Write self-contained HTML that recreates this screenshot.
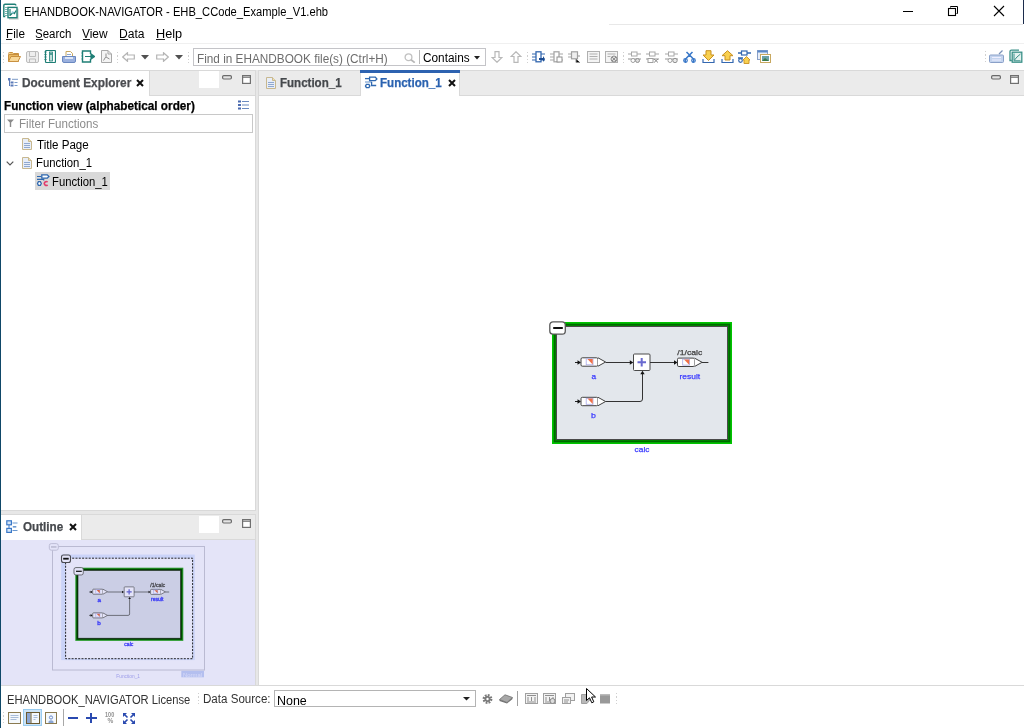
<!DOCTYPE html>
<html><head><meta charset="utf-8">
<style>
*{margin:0;padding:0;box-sizing:border-box}
html,body{width:1024px;height:728px;overflow:hidden;background:#fff}
body{position:relative;font-family:"Liberation Sans",sans-serif;font-size:12px;color:#000}
.a{position:absolute;display:block}
.t{position:absolute;white-space:nowrap;line-height:1;transform-origin:0 0}
</style></head><body>
<div class="a" style="left:0px;top:70px;width:1024px;height:615px;background:#e7e7e7;"></div>
<div class="a" style="left:609px;top:24px;width:414px;height:1px;background:#e8e8e8;"></div>
<div class="a" style="left:1px;top:43px;width:1023px;height:1px;background:#f0f0f0;"></div>
<div class="a" style="left:0px;top:0px;width:1px;height:728px;background:#0f4868;"></div>
<div class="a" style="left:1023px;top:0px;width:1px;height:24px;background:#1c2c4c;"></div>
<svg class="a" style="left:0px;top:0px;" width="24" height="24" viewBox="0 0 24 24"><rect x="9" y="8.6" width="9.6" height="11" fill="#a0a0a0" opacity="0.55"/><path d="M5.3 16.6H3.8V5.4Q3.8 4.2 5 4.2H14.7Q15.9 4.2 15.9 5.6" fill="none" stroke="#1f7f76" stroke-width="1.4"/><path d="M5 7.5H7.5M5 9.5H7.5M5 11.5H7.5M5 13.5H7.5M5 15.5H7.5" stroke="#7ab8b0" stroke-width="1"/><rect x="8" y="7.4" width="9" height="10.3" fill="#fff" stroke="#1f7f76" stroke-width="1.4"/><path d="M10 9V16M10.5 15L13 12.5L14.5 13.5L16 10.5" fill="none" stroke="#1f7f76" stroke-width="1.2"/><circle cx="12.6" cy="12.3" r="1.1" fill="#9cd"/></svg>
<div class="a" style="left:903px;top:11px;width:10px;height:1px;background:#000;"></div>
<svg class="a" style="left:947px;top:5px;" width="12" height="12" viewBox="0 0 12 12"><path d="M3.5 2.5V1.5H10.5V8.5H9.5" fill="none" stroke="#000" stroke-width="1"/><rect x="1.5" y="3.5" width="7" height="7" fill="none" stroke="#000" stroke-width="1.1"/></svg>
<svg class="a" style="left:993px;top:5px;" width="12" height="12" viewBox="0 0 12 12"><path d="M1 1L11 11M11 1L1 11" stroke="#000" stroke-width="1.1"/></svg>
<div class="a" style="left:6.3px;top:39px;width:6px;height:1px;background:#222;"></div>
<div class="a" style="left:36px;top:39px;width:7px;height:1px;background:#222;"></div>
<div class="a" style="left:82.5px;top:39px;width:7.5px;height:1px;background:#222;"></div>
<div class="a" style="left:119.8px;top:39px;width:8px;height:1px;background:#222;"></div>
<div class="a" style="left:156.3px;top:39px;width:8.5px;height:1px;background:#222;"></div>
<div class="a" style="left:3px;top:52.0px;width:1px;height:1.3px;background:#d0d0d0;"></div><div class="a" style="left:3px;top:55.3px;width:1px;height:1.3px;background:#d0d0d0;"></div><div class="a" style="left:3px;top:58.6px;width:1px;height:1.3px;background:#d0d0d0;"></div><div class="a" style="left:3px;top:61.9px;width:1px;height:1.3px;background:#d0d0d0;"></div>
<div class="a" style="left:117px;top:52.0px;width:1px;height:1.3px;background:#d0d0d0;"></div><div class="a" style="left:117px;top:55.3px;width:1px;height:1.3px;background:#d0d0d0;"></div><div class="a" style="left:117px;top:58.6px;width:1px;height:1.3px;background:#d0d0d0;"></div><div class="a" style="left:117px;top:61.9px;width:1px;height:1.3px;background:#d0d0d0;"></div>
<div class="a" style="left:188px;top:52.0px;width:1px;height:1.3px;background:#d0d0d0;"></div><div class="a" style="left:188px;top:55.3px;width:1px;height:1.3px;background:#d0d0d0;"></div><div class="a" style="left:188px;top:58.6px;width:1px;height:1.3px;background:#d0d0d0;"></div><div class="a" style="left:188px;top:61.9px;width:1px;height:1.3px;background:#d0d0d0;"></div>
<div class="a" style="left:527px;top:52.0px;width:1px;height:1.3px;background:#d0d0d0;"></div><div class="a" style="left:527px;top:55.3px;width:1px;height:1.3px;background:#d0d0d0;"></div><div class="a" style="left:527px;top:58.6px;width:1px;height:1.3px;background:#d0d0d0;"></div><div class="a" style="left:527px;top:61.9px;width:1px;height:1.3px;background:#d0d0d0;"></div>
<div class="a" style="left:623px;top:52.0px;width:1px;height:1.3px;background:#d0d0d0;"></div><div class="a" style="left:623px;top:55.3px;width:1px;height:1.3px;background:#d0d0d0;"></div><div class="a" style="left:623px;top:58.6px;width:1px;height:1.3px;background:#d0d0d0;"></div><div class="a" style="left:623px;top:61.9px;width:1px;height:1.3px;background:#d0d0d0;"></div>
<div class="a" style="left:985px;top:51.0px;width:1px;height:1.3px;background:#d0d0d0;"></div><div class="a" style="left:985px;top:54.3px;width:1px;height:1.3px;background:#d0d0d0;"></div><div class="a" style="left:985px;top:57.6px;width:1px;height:1.3px;background:#d0d0d0;"></div><div class="a" style="left:985px;top:60.9px;width:1px;height:1.3px;background:#d0d0d0;"></div>
<svg class="a" style="left:8px;top:52px;" width="13" height="10" viewBox="0 0 13 10"><path d="M0.5 1.5Q0.5 0.5 1.5 0.5H4.5L5.5 1.5H10.5V3.5" fill="#f0c878" stroke="#c89040"/><path d="M0.5 9.5V2.5H10.5V9.5Z" fill="#e8b860" stroke="#c89040"/><path d="M0.5 9.5L3 4.5H12.5L10 9.5Z" fill="#f8d898" stroke="#c89040"/></svg>
<svg class="a" style="left:26px;top:51px;" width="13" height="12" viewBox="0 0 13 12"><rect x="0.5" y="0.5" width="12" height="11" rx="1.5" fill="#eee" stroke="#bdbdbd"/><path d="M3.5 0.5V5.5H9.5V0.5M3.5 11.5V8H9.5V11.5" fill="none" stroke="#bdbdbd"/></svg>
<svg class="a" style="left:44px;top:50px;" width="12" height="13" viewBox="0 0 12 13"><rect x="1.5" y="0.5" width="10" height="12" rx="1" fill="#fff" stroke="#1f7f76" stroke-width="1.2"/><path d="M0.5 2H2.5M0.5 4.5H2.5M0.5 7H2.5M0.5 9.5H2.5" stroke="#1f7f76"/><rect x="5.5" y="2" width="3" height="9" fill="#bfe0dc" stroke="#1f7f76" stroke-width="0.8"/><circle cx="7" cy="4" r="0.9" fill="#1f7f76"/></svg>
<svg class="a" style="left:62px;top:51px;" width="14" height="12" viewBox="0 0 14 12"><path d="M4 6V0.5H8.5L10.5 2.5V6" fill="#fff" stroke="#c8a860"/><rect x="5" y="3" width="4" height="1" fill="#90a8d0"/><path d="M0.5 5.5H13.5V10Q13.5 11.5 12 11.5H2Q0.5 11.5 0.5 10Z" fill="#9ab0de" stroke="#6a88c0"/><rect x="3" y="6" width="8" height="2" fill="#dde6f6"/></svg>
<svg class="a" style="left:81px;top:50px;" width="14" height="13" viewBox="0 0 14 13"><path d="M9.5 4V1H1.5V12H9.5V9" fill="#fff" stroke="#1f7f76" stroke-width="1.4"/><path d="M0.5 3H2M0.5 6H2M0.5 9H2" stroke="#1f7f76"/><path d="M4 6.5H10V4L13.5 6.5L10 9V6.5" fill="#1f7f76" stroke="#1f7f76" stroke-width="1.2"/></svg>
<svg class="a" style="left:101px;top:50px;" width="11" height="13" viewBox="0 0 11 13"><path d="M0.5 0.5H7L10.5 4V12.5H0.5Z" fill="#f4f4f4" stroke="#a8a8a8"/><path d="M7 0.5V4H10.5" fill="none" stroke="#a8a8a8"/><path d="M2.5 10.5L5 6.5L5 3.5M5 7L8.5 9" fill="none" stroke="#909090"/></svg>
<svg class="a" style="left:122px;top:52px;" width="13" height="10" viewBox="0 0 13 10"><path d="M0.7 5L5.5 0.7V3H12.3V7H5.5V9.3Z" fill="#fff" stroke="#b4b4b4" stroke-width="1.2"/></svg>
<svg class="a" style="left:156px;top:52px;" width="13" height="10" viewBox="0 0 13 10"><path d="M12.3 5L7.5 0.7V3H0.7V7H7.5V9.3Z" fill="#fff" stroke="#b4b4b4" stroke-width="1.2"/></svg>
<svg class="a" style="left:141px;top:55px;" width="9" height="5" viewBox="0 0 9 5"><path d="M0 0H8L4 4.5Z" fill="#505050"/></svg>
<svg class="a" style="left:175px;top:55px;" width="9" height="5" viewBox="0 0 9 5"><path d="M0 0H8L4 4.5Z" fill="#505050"/></svg>
<div class="a" style="left:193px;top:48px;width:293px;height:18px;background:#fff;border:1px solid #c4c4c8"></div>
<svg class="a" style="left:404px;top:53px;" width="12" height="10" viewBox="0 0 12 10"><circle cx="4.5" cy="4.2" r="3.4" fill="#fff" stroke="#c0c0c0" stroke-width="1.3"/><path d="M7 6.8L10.8 9.6" stroke="#b8b8b8" stroke-width="1.8"/></svg>
<div class="a" style="left:418.5px;top:50px;width:1px;height:14px;background:#b8b8b8;"></div>
<svg class="a" style="left:474px;top:56px;" width="6" height="4" viewBox="0 0 6 4"><path d="M0 0H6L3 3.5Z" fill="#202020"/></svg>
<svg class="a" style="left:491px;top:51px;" width="12" height="12" viewBox="0 0 12 12"><path d="M4 0.7H8V6.5H11L6 11.3L1 6.5H4Z" fill="#fff" stroke="#b8b8b8" stroke-width="1.2"/></svg>
<svg class="a" style="left:510px;top:51px;" width="12" height="12" viewBox="0 0 12 12"><path d="M4 11.3H8V5.5H11L6 0.7L1 5.5H4Z" fill="#fff" stroke="#b8b8b8" stroke-width="1.2"/></svg>
<svg class="a" style="left:532px;top:51px;" width="13" height="12" viewBox="0 0 13 12"><rect x="4" y="0.8" width="5" height="10" fill="#fff" stroke="#3468b0" stroke-width="1.3"/><path d="M0 3H4M0 6H4M0 9H4M9 3H13M9 9H13" stroke="#3468b0" stroke-width="1.2"/><path d="M7 7H11V5L13 8L11 11V9H7Z" fill="#1a4a90"/></svg>
<svg class="a" style="left:550px;top:51px;" width="13" height="12" viewBox="0 0 13 12"><rect x="4" y="0.8" width="5" height="10" fill="#fff" stroke="#a8a8a8" stroke-width="1.3"/><path d="M0 3H4M0 6H4M0 9H4M9 3H13M9 9H13" stroke="#a8a8a8" stroke-width="1.2"/><rect x="7" y="6" width="5" height="5" fill="#fff" stroke="#909090"/></svg>
<svg class="a" style="left:568px;top:51px;" width="13" height="12" viewBox="0 0 13 12"><path d="M0 3H3M0 6H3" stroke="#a8a8a8" stroke-width="1.2"/><rect x="3.5" y="0.8" width="6" height="7" fill="#eee" stroke="#a0a0a0" stroke-width="1.2"/><path d="M8 8V11.5H12M10 5H12" stroke="#909090"/></svg>
<svg class="a" style="left:587px;top:51px;" width="13" height="12" viewBox="0 0 13 12"><rect x="0.5" y="0.5" width="12" height="11" fill="#f4f4f4" stroke="#b0b0b0"/><path d="M2.5 3H10.5M2.5 5.5H10.5M2.5 8H10.5" stroke="#b0b0b0"/></svg>
<svg class="a" style="left:605px;top:51px;" width="13" height="12" viewBox="0 0 13 12"><rect x="0.5" y="0.5" width="12" height="11" fill="#f4f4f4" stroke="#b0b0b0"/><path d="M2.5 3H10.5M2.5 5.5H5.5" stroke="#b0b0b0"/><circle cx="9" cy="8" r="3" fill="#ddd" stroke="#909090"/><path d="M7 6L11 10M11 6L7 10" stroke="#909090"/></svg>
<svg class="a" style="left:628px;top:51px;" width="13" height="12" viewBox="0 0 13 12"><path d="M0 3H3M9 3H13" stroke="#a8a8a8" stroke-width="1.2"/><rect x="3.5" y="1" width="5.5" height="4" fill="#fff" stroke="#a8a8a8"/><path d="M0 8H13" stroke="#a8a8a8" stroke-width="1.2"/><circle cx="5" cy="9.5" r="2" fill="#fff" stroke="#a0a0a0"/><circle cx="9.5" cy="9.5" r="2" fill="#ddd" stroke="#909090"/></svg>
<svg class="a" style="left:646px;top:51px;" width="13" height="12" viewBox="0 0 13 12"><path d="M0 3H3M9 3H13" stroke="#a8a8a8" stroke-width="1.2"/><rect x="3.5" y="1" width="5.5" height="4" fill="#fff" stroke="#a8a8a8"/><path d="M0 8H13" stroke="#a8a8a8" stroke-width="1.2"/><rect x="2" y="7.5" width="5" height="4" fill="#fff" stroke="#a0a0a0"/><path d="M8 8L12 11.5M12 8L8 11.5" stroke="#909090"/></svg>
<svg class="a" style="left:665px;top:51px;" width="13" height="12" viewBox="0 0 13 12"><path d="M0 3H3M9 3H13" stroke="#a8a8a8" stroke-width="1.2"/><rect x="3.5" y="1" width="5.5" height="4" fill="#fff" stroke="#a8a8a8"/><path d="M0 8H13" stroke="#a8a8a8" stroke-width="1.2"/><circle cx="5" cy="9.5" r="2" fill="#fff" stroke="#a0a0a0"/><circle cx="10" cy="9.5" r="2.2" fill="#e8e8e8" stroke="#909090"/></svg>
<svg class="a" style="left:683px;top:51px;" width="13" height="13" viewBox="0 0 13 13"><path d="M3 11.5Q1 9 3.5 7L9.5 1M9.5 11.5Q12 9 9.5 7L3.5 1" fill="none" stroke="#3a78c8" stroke-width="1.6"/><circle cx="2.5" cy="9.5" r="1.8" fill="none" stroke="#3a78c8" stroke-width="1.2"/><circle cx="10.5" cy="9.5" r="1.8" fill="none" stroke="#3a78c8" stroke-width="1.2"/></svg>
<svg class="a" style="left:702px;top:50px;" width="13" height="14" viewBox="0 0 13 14"><path d="M4 0.7H9V5H12L6.5 10.5L1 5H4Z" fill="#f8d050" stroke="#c89020" stroke-width="1"/><path d="M1 9V12.5H12V9" fill="none" stroke="#3468b0" stroke-width="1.2"/></svg>
<svg class="a" style="left:721px;top:50px;" width="13" height="14" viewBox="0 0 13 14"><path d="M4 10H9V5.7H12L6.5 0.7L1 5.7H4Z" fill="#f8d050" stroke="#c89020" stroke-width="1"/><path d="M1 9V12.5H12V9" fill="none" stroke="#3468b0" stroke-width="1.2"/></svg>
<svg class="a" style="left:738px;top:50px;" width="14" height="14" viewBox="0 0 14 14"><path d="M0 3H3M9 3H13M0 8H5" stroke="#3468b0" stroke-width="1.3"/><rect x="3.5" y="1" width="5.5" height="4" fill="#fff" stroke="#3468b0" stroke-width="1.2"/><circle cx="2.5" cy="10.5" r="1.8" fill="#fff" stroke="#3468b0" stroke-width="1.2"/><path d="M6 13.5V10H5L8.5 6.5L12 10H11V13.5Z" fill="#f8d050" stroke="#c89020" stroke-width="0.9"/></svg>
<svg class="a" style="left:757px;top:50px;" width="14" height="13" viewBox="0 0 14 13"><rect x="0.5" y="0.5" width="10" height="9" fill="#e8eef8" stroke="#8aa0c8"/><rect x="0.5" y="0.5" width="10" height="2" fill="#5a88c8"/><rect x="3.5" y="4.5" width="10" height="8" fill="#fff" stroke="#c8a860"/><rect x="5" y="6" width="7" height="5" fill="#6aa0a8"/><path d="M5 11L8 8L12 11Z" fill="#3a7a48"/></svg>
<svg class="a" style="left:989px;top:50px;" width="15" height="13" viewBox="0 0 15 13"><path d="M10 4L13.5 0.5" stroke="#7a90b8" stroke-width="1.2"/><rect x="0.5" y="5" width="14" height="7.5" rx="1" fill="#c4d4ee" stroke="#8aa0c8"/><path d="M3 7.5H12M3 10H12" stroke="#eef" stroke-width="1"/></svg>
<svg class="a" style="left:1008px;top:49px;" width="15" height="14" viewBox="0 0 15 14"><path d="M3.8 11.5H2V2.6Q2 1.2 3.4 1.2H11" fill="none" stroke="#3a9088" stroke-width="1.3"/><rect x="4.2" y="3.2" width="9.6" height="10" fill="#e4f2f0" stroke="#3a9088" stroke-width="1.3"/><path d="M6 4.5V11.8H12.5M6.5 11L9 8L12.5 5" fill="none" stroke="#3a9088" stroke-width="1"/></svg>
<div class="a" style="left:1px;top:70px;width:255px;height:441px;background:#fff;border:1px solid #d9d9d9;border-left:none"></div>
<div class="a" style="left:149px;top:71px;width:106px;height:25px;background:#ebebeb;border-left:1px solid #d9d9d9;border-bottom:1px solid #d9d9d9"></div>
<div class="a" style="left:199px;top:71px;width:20px;height:17px;background:#fff;"></div>
<svg class="a" style="left:222px;top:75px;" width="10" height="5" viewBox="0 0 10 5"><rect x="0.6" y="0.6" width="8.8" height="3.4" rx="1.2" fill="#e4e4e4" stroke="#6a6a6a" stroke-width="1.2"/></svg><svg class="a" style="left:242px;top:75px;" width="9" height="9" viewBox="0 0 9 9"><rect x="0.6" y="0.6" width="7.8" height="7.8" fill="#fff" stroke="#707070" stroke-width="1.2"/><rect x="0.6" y="1.6" width="7.8" height="1.2" fill="#707070"/></svg>
<svg class="a" style="left:238px;top:100px;" width="11" height="10" viewBox="0 0 11 10"><rect x="0" y="0.5" width="3" height="2" fill="#4a6ab0"/><rect x="0" y="4" width="3" height="2" fill="#4a6ab0"/><rect x="0" y="7.5" width="3" height="2" fill="#4a6ab0"/><rect x="4" y="1" width="7" height="1" fill="#6a8ac0"/><rect x="4" y="4.5" width="7" height="1" fill="#6a8ac0"/><rect x="4" y="8" width="7" height="1" fill="#6a8ac0"/></svg>
<svg class="a" style="left:8px;top:78px;" width="10" height="9" viewBox="0 0 10 9"><rect x="0" y="0" width="2.5" height="2.5" fill="#5a7ab8"/><rect x="1" y="2" width="1" height="6" fill="#5a7ab8"/><rect x="2.5" y="3.5" width="3" height="2" fill="#5a7ab8"/><rect x="2.5" y="6.5" width="3" height="2" fill="#5a7ab8"/><rect x="4" y="0.8" width="6" height="1" fill="#7a9ac8"/><rect x="6.5" y="4" width="3" height="1" fill="#7a9ac8"/><rect x="6.5" y="7" width="3" height="1" fill="#7a9ac8"/></svg>
<svg class="a" style="left:136px;top:79px;" width="8" height="8" viewBox="0 0 8 8"><path d="M1 1L7 7M7 1L1 7" stroke="#111" stroke-width="2"/></svg>
<div class="a" style="left:4px;top:114px;width:249px;height:19px;background:#fff;border:1px solid #c8c8c8"></div>
<svg class="a" style="left:7px;top:119px;" width="7" height="8" viewBox="0 0 7 8"><path d="M0 0.5H7L4.2 3.5V8H2.8V3.5Z" fill="#8a8a8a"/></svg>
<svg class="a" style="left:6px;top:161px;" width="8" height="5" viewBox="0 0 8 5"><path d="M0.7 0.7L4 4L7.3 0.7" stroke="#555" stroke-width="1.2" fill="none"/></svg>
<svg class="a" style="left:22px;top:138px;" width="10" height="12" viewBox="0 0 10 12"><path d="M0.5 0.5H6.5L9.5 3.5V11.5H0.5Z" fill="#e8eef8" stroke="#c8b890"/><path d="M6.5 0.5V3.5H9.5" fill="#f0e0b0" stroke="#c8b890"/><rect x="2" y="5" width="6" height="1" fill="#90a8d0"/><rect x="2" y="7" width="6" height="1" fill="#90a8d0"/><rect x="2" y="9" width="6" height="1" fill="#90a8d0"/></svg>
<svg class="a" style="left:22px;top:157px;" width="10" height="12" viewBox="0 0 10 12"><path d="M0.5 0.5H6.5L9.5 3.5V11.5H0.5Z" fill="#e8eef8" stroke="#c8b890"/><path d="M6.5 0.5V3.5H9.5" fill="#f0e0b0" stroke="#c8b890"/><rect x="2" y="5" width="6" height="1" fill="#90a8d0"/><rect x="2" y="7" width="6" height="1" fill="#90a8d0"/><rect x="2" y="9" width="6" height="1" fill="#90a8d0"/></svg>
<div class="a" style="left:35px;top:172px;width:75px;height:18px;background:#d9d9d9;"></div>
<svg class="a" style="left:36px;top:173px;" width="14" height="14" viewBox="0 0 14 14"><path d="M1 3.5H5.2M1 6.4H7.7V7.6" stroke="#2f68b0" stroke-width="1.2" fill="none"/><path d="M5.8 1.9H11.3L12.9 3.5L11.3 5.1H5.8Z" fill="#fff" stroke="#2f68b0" stroke-width="1.3"/><path d="M1.5 10.5L2.4 8.7H4.4L5.3 10.5L4.4 12.3H2.4Z" fill="#fff" stroke="#2f68b0" stroke-width="1.3"/><path d="M11.6 9.1A1.9 1.9 0 1 0 11.6 11.9" stroke="#e03c6c" stroke-width="1.6" fill="none"/></svg>
<div class="a" style="left:1px;top:514px;width:255px;height:171px;background:#fff;border:1px solid #d9d9d9;border-left:none;border-bottom:none"></div>
<div class="a" style="left:1px;top:515px;width:254px;height:25px;background:#ebebeb;border-bottom:1px solid #d9d9d9"></div>
<div class="a" style="left:1px;top:515px;width:81px;height:25px;background:#fff;border-right:1px solid #d9d9d9"></div>
<div class="a" style="left:199px;top:516px;width:20px;height:17px;background:#fff;"></div>
<svg class="a" style="left:222px;top:519px;" width="10" height="5" viewBox="0 0 10 5"><rect x="0.6" y="0.6" width="8.8" height="3.4" rx="1.2" fill="#e4e4e4" stroke="#6a6a6a" stroke-width="1.2"/></svg><svg class="a" style="left:242px;top:519px;" width="9" height="9" viewBox="0 0 9 9"><rect x="0.6" y="0.6" width="7.8" height="7.8" fill="#fff" stroke="#707070" stroke-width="1.2"/><rect x="0.6" y="1.6" width="7.8" height="1.2" fill="#707070"/></svg>
<svg class="a" style="left:6px;top:520px;" width="12" height="13" viewBox="0 0 12 13"><rect x="0.8" y="0.8" width="4.6" height="4" fill="#d4e6f8" stroke="#3a78c8" stroke-width="1.2"/><rect x="0.8" y="8.4" width="4.6" height="4" fill="#d4e6f8" stroke="#3a78c8" stroke-width="1.2"/><path d="M3 5V8.4" stroke="#3a78c8"/><path d="M6.5 3H11.5M6.5 10.5H11.5" stroke="#6a98d0" stroke-width="1.2"/><rect x="6.8" y="6" width="3.5" height="1.6" fill="#6a98d0"/></svg>
<svg class="a" style="left:68.5px;top:523px;" width="8" height="8" viewBox="0 0 8 8"><path d="M1 1L7 7M7 1L1 7" stroke="#111" stroke-width="2"/></svg>
<div class="a" style="left:258px;top:70px;width:766px;height:615px;background:#fff;border:1px solid #d9d9d9;border-right:none;border-bottom:none"></div>
<div class="a" style="left:259px;top:71px;width:765px;height:25px;background:#ebebeb;border-bottom:1px solid #d9d9d9"></div>
<div class="a" style="left:360px;top:70px;width:100px;height:26px;background:#fff;border-left:1px solid #d9d9d9;border-right:1px solid #d9d9d9"></div>
<div class="a" style="left:360px;top:70px;width:100px;height:2.6px;background:#2d62b0;"></div>
<svg class="a" style="left:266px;top:77px;" width="10" height="12" viewBox="0 0 10 12"><path d="M0.5 0.5H6.5L9.5 3.5V11.5H0.5Z" fill="#e8eef8" stroke="#c8b890"/><path d="M6.5 0.5V3.5H9.5" fill="#f0e0b0" stroke="#c8b890"/><rect x="2" y="5" width="6" height="1" fill="#90a8d0"/><rect x="2" y="7" width="6" height="1" fill="#90a8d0"/><rect x="2" y="9" width="6" height="1" fill="#90a8d0"/></svg>
<svg class="a" style="left:364px;top:76px;" width="14" height="14" viewBox="0 0 14 14"><path d="M1 2.6H5.2" stroke="#2f68b0" stroke-width="1.3"/><path d="M1 6H8" stroke="#7aa0d0" stroke-width="1.2"/><path d="M7.6 6V9.5H12.2" stroke="#2f68b0" stroke-width="1.3" fill="none"/><path d="M5.6 1.2H11.3L12.9 2.9L11.3 4.6H5.6Z" fill="#fff" stroke="#2f68b0" stroke-width="1.3"/><path d="M1.5 10L2.4 8.4H4.9L5.8 10L4.9 11.6H2.4Z" fill="#fff" stroke="#2f68b0" stroke-width="1.4"/></svg>
<svg class="a" style="left:448px;top:79px;" width="8" height="8" viewBox="0 0 8 8"><path d="M1 1L7 7M7 1L1 7" stroke="#111" stroke-width="2"/></svg>
<svg class="a" style="left:991px;top:75px;" width="10" height="5" viewBox="0 0 10 5"><rect x="0.6" y="0.6" width="8.8" height="3.4" rx="1.2" fill="#e4e4e4" stroke="#6a6a6a" stroke-width="1.2"/></svg><svg class="a" style="left:1010px;top:75px;" width="9" height="9" viewBox="0 0 9 9"><rect x="0.6" y="0.6" width="7.8" height="7.8" fill="#fff" stroke="#707070" stroke-width="1.2"/><rect x="0.6" y="1.6" width="7.8" height="1.2" fill="#707070"/></svg>
<div class="a" style="left:1px;top:685px;width:1023px;height:1px;background:#d9d9d9;"></div>
<svg class="a" style="left:540px;top:310px;overflow:visible" width="220" height="160" viewBox="-12 -12 220 160" font-family="Liberation Sans"><rect x="0" y="0" width="180" height="122" fill="#00c400"/><rect x="1.7" y="1.7" width="176.6" height="118.6" fill="#006800"/><rect x="3.3" y="3.3" width="173.4" height="115.4" fill="#008a00"/><rect x="4.5" y="4.5" width="171" height="113" fill="#e3e7ec" stroke="#4a4a4a" stroke-width="1"/><rect x="-2.2" y="-0.2" width="15.5" height="12.3" rx="3.2" fill="#fff" stroke="#585858" stroke-width="1.3"/><rect x="1.2" y="5" width="9.6" height="2" fill="#111"/><path d="M23 40.5H28" stroke="#222" stroke-width="1"/><path d="M25.5 38.3L29 40.5L25.5 42.7Z" fill="#111"/><rect x="29" y="35.8" width="17" height="8.4" rx="1.3" fill="#fff" stroke="#404040" stroke-width="1"/><rect x="34.2" y="36.8" width="6.8" height="6" fill="#fff" stroke="#a8a8e8" stroke-width="0.8"/><path d="M35.5 37.099999999999994H40.7V42.4Z" fill="#f07048"/><path d="M46 35.8L53.6 40.0L46 44.199999999999996" fill="#fff" stroke="#404040" stroke-width="1"/><path d="M53.6 40.5H78" stroke="#333" stroke-width="1"/><path d="M77.8 38.3L81.3 40.5L77.8 42.7Z" fill="#111"/><rect x="81.5" y="32" width="16.5" height="16.5" rx="1" fill="#fff" stroke="#4a4a4a" stroke-width="1"/><path d="M85.5 40.2H94M89.7 36V44.5" stroke="#6a6ad0" stroke-width="2"/><path d="M98 40.5H122" stroke="#333" stroke-width="1"/><path d="M122.0 38.3L125.5 40.5L122.0 42.7Z" fill="#111"/><rect x="125.5" y="36.1" width="17" height="8.4" rx="1.3" fill="#fff" stroke="#404040" stroke-width="1"/><rect x="130.7" y="37.1" width="6.8" height="6" fill="#fff" stroke="#a8a8e8" stroke-width="0.8"/><path d="M132.0 37.4H137.2V42.7Z" fill="#f07048"/><path d="M142.5 36.1L150.1 40.300000000000004L142.5 44.5" fill="#fff" stroke="#404040" stroke-width="1"/><path d="M150 40.5H156.4" stroke="#333" stroke-width="1"/><path d="M23 79.5H28" stroke="#222" stroke-width="1"/><path d="M25.5 77.3L29 79.5L25.5 81.7Z" fill="#111"/><rect x="29" y="75.3" width="17" height="8.4" rx="1.3" fill="#fff" stroke="#404040" stroke-width="1"/><rect x="34.2" y="76.3" width="6.8" height="6" fill="#fff" stroke="#a8a8e8" stroke-width="0.8"/><path d="M35.5 76.6H40.7V81.89999999999999Z" fill="#f07048"/><path d="M46 75.3L53.6 79.5L46 83.7" fill="#fff" stroke="#404040" stroke-width="1"/><path d="M53.6 79.5H88Q90.5 79.5 90.5 77V51" stroke="#333" stroke-width="1" fill="none"/><path d="M88.3 52.3L90.5 48.8L92.7 52.3Z" fill="#111"/><text x="125.3" y="32.9" font-size="8" fill="#404040" stroke="#404040" stroke-width="0.25" textLength="25" lengthAdjust="spacingAndGlyphs">/1/calc</text><text x="39.4" y="57.4" font-size="8" fill="#3c3cff" stroke="#3c3cff" stroke-width="0.25" textLength="4.6" lengthAdjust="spacingAndGlyphs">a</text><text x="127.5" y="57.3" font-size="8" fill="#3c3cff" stroke="#3c3cff" stroke-width="0.25" textLength="20.6" lengthAdjust="spacingAndGlyphs">result</text><text x="39.1" y="96" font-size="8" fill="#3c3cff" stroke="#3c3cff" stroke-width="0.25" textLength="4.9" lengthAdjust="spacingAndGlyphs">b</text><text x="82.6" y="130.3" font-size="8" fill="#3c3cff" stroke="#3c3cff" stroke-width="0.25" textLength="14.8" lengthAdjust="spacingAndGlyphs">calc</text></svg>
<svg class="a" style="left:0;top:0" width="256" height="685" viewBox="0 0 256 685" font-family="Liberation Sans"><clipPath id="oc"><rect x="1" y="540" width="254" height="145"/></clipPath><g clip-path="url(#oc)"><rect x="52.5" y="546.5" width="152" height="123.5" fill="none" stroke="#d0d0d8" stroke-width="1"/><rect x="49.3" y="543.6" width="9" height="6.6" rx="2" fill="#fff" stroke="#d4d4dc" stroke-width="1"/><rect x="51" y="546.3" width="5.5" height="1.3" fill="#c8c8d0"/><rect x="61.2" y="554.6" width="133.5" height="105.5" fill="#e2ecff"/><rect x="65.6" y="558.2" width="127" height="100.5" fill="#fff" stroke="#111" stroke-width="0.9" stroke-dasharray="2 1.3"/><rect x="61.5" y="555" width="9" height="7.5" rx="2" fill="#fff" stroke="#555" stroke-width="1.1"/><rect x="63.2" y="557.8" width="5.5" height="1.8" fill="#111"/><g transform="translate(75.3 567.7) scale(0.6)"><rect x="0" y="0" width="180" height="122" fill="#30b030"/><rect x="1.7" y="1.7" width="176.6" height="118.6" fill="#005400"/><rect x="3.3" y="3.3" width="173.4" height="115.4" fill="#004000"/><rect x="4.5" y="4.5" width="171" height="113" fill="#e3e7ec" stroke="#102010" stroke-width="1"/><rect x="-2.2" y="-0.2" width="15.5" height="12.3" rx="3.2" fill="#fff" stroke="#585858" stroke-width="1.3"/><rect x="1.2" y="5" width="9.6" height="2" fill="#111"/><path d="M23 40.5H28" stroke="#222" stroke-width="1"/><path d="M25.5 38.3L29 40.5L25.5 42.7Z" fill="#111"/><rect x="29" y="35.8" width="17" height="8.4" rx="1.3" fill="#fff" stroke="#404040" stroke-width="1"/><rect x="34.2" y="36.8" width="6.8" height="6" fill="#fff" stroke="#a8a8e8" stroke-width="0.8"/><path d="M35.5 37.099999999999994H40.7V42.4Z" fill="#f07048"/><path d="M46 35.8L53.6 40.0L46 44.199999999999996" fill="#fff" stroke="#404040" stroke-width="1"/><path d="M53.6 40.5H78" stroke="#333" stroke-width="1"/><path d="M77.8 38.3L81.3 40.5L77.8 42.7Z" fill="#111"/><rect x="81.5" y="32" width="16.5" height="16.5" rx="1" fill="#fff" stroke="#4a4a4a" stroke-width="1"/><path d="M85.5 40.2H94M89.7 36V44.5" stroke="#6a6ad0" stroke-width="2"/><path d="M98 40.5H122" stroke="#333" stroke-width="1"/><path d="M122.0 38.3L125.5 40.5L122.0 42.7Z" fill="#111"/><rect x="125.5" y="36.1" width="17" height="8.4" rx="1.3" fill="#fff" stroke="#404040" stroke-width="1"/><rect x="130.7" y="37.1" width="6.8" height="6" fill="#fff" stroke="#a8a8e8" stroke-width="0.8"/><path d="M132.0 37.4H137.2V42.7Z" fill="#f07048"/><path d="M142.5 36.1L150.1 40.300000000000004L142.5 44.5" fill="#fff" stroke="#404040" stroke-width="1"/><path d="M150 40.5H156.4" stroke="#333" stroke-width="1"/><path d="M23 79.5H28" stroke="#222" stroke-width="1"/><path d="M25.5 77.3L29 79.5L25.5 81.7Z" fill="#111"/><rect x="29" y="75.3" width="17" height="8.4" rx="1.3" fill="#fff" stroke="#404040" stroke-width="1"/><rect x="34.2" y="76.3" width="6.8" height="6" fill="#fff" stroke="#a8a8e8" stroke-width="0.8"/><path d="M35.5 76.6H40.7V81.89999999999999Z" fill="#f07048"/><path d="M46 75.3L53.6 79.5L46 83.7" fill="#fff" stroke="#404040" stroke-width="1"/><path d="M53.6 79.5H88Q90.5 79.5 90.5 77V51" stroke="#333" stroke-width="1" fill="none"/><path d="M88.3 52.3L90.5 48.8L92.7 52.3Z" fill="#111"/></g><text x="150.2" y="587.2" font-size="5" fill="#505050" stroke="#505050" stroke-width="0.3" textLength="15" lengthAdjust="spacingAndGlyphs">/1/calc</text><text x="97.5" y="601.5" font-size="5" fill="#4040ff" stroke="#4040ff" stroke-width="0.3" textLength="3.5" lengthAdjust="spacingAndGlyphs">a</text><text x="151" y="601.3" font-size="5" fill="#4040ff" stroke="#4040ff" stroke-width="0.3" textLength="12.5" lengthAdjust="spacingAndGlyphs">result</text><text x="97.3" y="624.6" font-size="5" fill="#4040ff" stroke="#4040ff" stroke-width="0.3" textLength="3.5" lengthAdjust="spacingAndGlyphs">b</text><text x="124.3" y="645.5" font-size="5" fill="#4040ff" stroke="#4040ff" stroke-width="0.3" textLength="9" lengthAdjust="spacingAndGlyphs">calc</text><text x="116.3" y="678" font-size="5" fill="#b0b0f0" textLength="23.7" lengthAdjust="spacingAndGlyphs">Function_1</text><rect x="181.3" y="670.8" width="22.7" height="6.5" fill="#cad6f6"/><text x="183" y="676.5" font-size="6" fill="#f0f4ff" textLength="19" lengthAdjust="spacingAndGlyphs">Normal</text></g></svg>
<div class="a" style="left:1px;top:540px;width:254px;height:145px;background:#e4e4f8;mix-blend-mode:multiply"></div>
<div class="a" style="left:197.5px;top:693.0px;width:1px;height:1.3px;background:#d0d0d0;"></div><div class="a" style="left:197.5px;top:696.3px;width:1px;height:1.3px;background:#d0d0d0;"></div><div class="a" style="left:197.5px;top:699.6px;width:1px;height:1.3px;background:#d0d0d0;"></div><div class="a" style="left:197.5px;top:702.9px;width:1px;height:1.3px;background:#d0d0d0;"></div>
<div class="a" style="left:274px;top:690px;width:202px;height:17px;background:#fff;border:1px solid #b4b4b4"></div>
<svg class="a" style="left:463px;top:697px;" width="8" height="4" viewBox="0 0 8 4"><path d="M0 0H7L3.5 3.5Z" fill="#202020"/></svg>
<svg class="a" style="left:482px;top:694px;" width="11" height="10" viewBox="0 0 11 10"><circle cx="5.5" cy="5" r="3.6" fill="none" stroke="#7a7a7a" stroke-width="2.6" stroke-dasharray="1.7 1.1"/><circle cx="5.5" cy="5" r="3" fill="#7a7a7a"/><circle cx="5.5" cy="5" r="1.2" fill="#fff"/></svg>
<svg class="a" style="left:499px;top:694px;" width="14" height="10" viewBox="0 0 14 10"><path d="M0.5 5.5L6 0.8L13.5 3.5L8 8.5Z" fill="#a8a8a8" stroke="#707070" stroke-width="0.8"/><path d="M0.5 5.5V7L8 9.5L13.5 5V3.5L8 8.5Z" fill="#707070"/></svg>
<div class="a" style="left:517px;top:691px;width:1px;height:15px;background:#a0a0a0;"></div>
<svg class="a" style="left:524.5px;top:693px;" width="13" height="11" viewBox="0 0 13 11"><rect x="0.5" y="0.5" width="12" height="10" fill="#f2f2f2" stroke="#a0a0a0"/><path d="M2 2.5H11M3 4V8M6.5 4V8M10 4V8M2 9H11" stroke="#909090" stroke-width="1"/></svg>
<svg class="a" style="left:543px;top:693px;" width="13" height="11" viewBox="0 0 13 11"><rect x="0.5" y="0.5" width="12" height="10" fill="#f2f2f2" stroke="#a0a0a0"/><path d="M2 2.5H11M3 4V8M6.5 4V8M10 4V8M2 9H11" stroke="#909090" stroke-width="1"/><circle cx="9.5" cy="8" r="2.5" fill="#ddd" stroke="#888"/></svg>
<svg class="a" style="left:561.5px;top:693px;" width="13" height="11" viewBox="0 0 13 11"><rect x="3.5" y="0.5" width="9" height="7" fill="#f2f2f2" stroke="#a0a0a0"/><rect x="0.5" y="4.5" width="8" height="6" fill="#f2f2f2" stroke="#a0a0a0"/><path d="M2 7H7M2 9H6" stroke="#909090"/></svg>
<svg class="a" style="left:581px;top:694px;" width="10" height="10" viewBox="0 0 10 10"><path d="M0.5 0.5H6L9.5 5L6 9.5H0.5Z" fill="#b8b8b8" stroke="#a0a0a0"/></svg>
<svg class="a" style="left:600px;top:694px;" width="10" height="10" viewBox="0 0 10 10"><rect x="0" y="0" width="10" height="9.5" fill="#999"/><rect x="0" y="0" width="10" height="1.5" fill="#bbb"/></svg>
<div class="a" style="left:615.5px;top:693.0px;width:1px;height:1.3px;background:#d0d0d0;"></div><div class="a" style="left:615.5px;top:696.3px;width:1px;height:1.3px;background:#d0d0d0;"></div><div class="a" style="left:615.5px;top:699.6px;width:1px;height:1.3px;background:#d0d0d0;"></div><div class="a" style="left:615.5px;top:702.9px;width:1px;height:1.3px;background:#d0d0d0;"></div>
<svg class="a" style="left:586px;top:688px;" width="11" height="16" viewBox="0 0 11 16"><path d="M0.5 0.5V12.5L3.5 9.8L5.8 14.8L7.8 13.8L5.6 9H9.5Z" fill="#fff" stroke="#000" stroke-width="1" stroke-linejoin="round"/></svg>
<div class="a" style="left:3px;top:712.0px;width:1px;height:1.3px;background:#d0d0d0;"></div><div class="a" style="left:3px;top:715.3px;width:1px;height:1.3px;background:#d0d0d0;"></div><div class="a" style="left:3px;top:718.6px;width:1px;height:1.3px;background:#d0d0d0;"></div><div class="a" style="left:3px;top:721.9px;width:1px;height:1.3px;background:#d0d0d0;"></div>
<div class="a" style="left:23px;top:709px;width:19px;height:17px;background:#cce4f7;border:1px solid #99ccf0"></div>
<svg class="a" style="left:8px;top:712px;" width="13" height="12" viewBox="0 0 13 12"><rect x="0.5" y="0.5" width="12" height="11" fill="#f4f8fc" stroke="#8a7a50"/><path d="M2.5 3.5H10.5M2.5 5.5H10.5M2.5 7.5H8.5" stroke="#a8bcd8" stroke-width="1"/></svg>
<svg class="a" style="left:26px;top:712px;" width="14" height="12" viewBox="0 0 14 12"><rect x="0.5" y="0.5" width="13" height="11" fill="#f4f8fc" stroke="#6a5a30"/><rect x="1" y="1" width="3.5" height="10" fill="#8aa6d4"/><path d="M5 0.5V11.5" stroke="#6a5a30"/><path d="M7.5 3.5H11.5M7.5 5.5H11.5M7.5 7.5H9.5" stroke="#a8bcd8"/></svg>
<svg class="a" style="left:45px;top:712px;" width="12" height="12" viewBox="0 0 12 12"><rect x="0.5" y="0.5" width="11" height="11" fill="#f4f8fc" stroke="#8a7a50"/><circle cx="6" cy="5.5" r="1.6" fill="none" stroke="#6a8ac8"/><path d="M3.5 11V9.5Q6 7 8.5 9.5V11" fill="#8aa6d4"/></svg>
<div class="a" style="left:62.5px;top:709px;width:1px;height:17px;background:#a8a8a8;"></div>
<div class="a" style="left:67.5px;top:717px;width:10.5px;height:2px;background:#2a4ab0;"></div>
<div class="a" style="left:86px;top:717px;width:10.5px;height:2px;background:#2a4ab0;"></div>
<div class="a" style="left:90.2px;top:713px;width:2px;height:10px;background:#2a4ab0;"></div>
<div class="t" style="left:105px;top:712px;font-size:6.5px;font-weight:bold;color:#909090;transform:scaleX(0.85)">100</div><div class="t" style="left:107.5px;top:717.5px;font-size:6.5px;font-weight:bold;color:#909090">%</div>
<svg class="a" style="left:122.5px;top:712.5px;" width="12" height="11" viewBox="0 0 12 11"><path d="M1 1L4.5 4.5M11 1L7.5 4.5M1 10L4.5 6.5M11 10L7.5 6.5" stroke="#2a4ab0" stroke-width="1.6"/><path d="M0 0H4L0 4ZM12 0H8L12 4ZM0 11H4L0 7ZM12 11H8L12 7Z" fill="#2a4ab0"/></svg>
<div class="t" style="left:23.67px;top:6.00px;font-size:12px;font-weight:400;color:#000;transform:scaleX(0.9305)">EHANDBOOK-NAVIGATOR - EHB_CCode_Example_V1.ehb</div>
<div class="t" style="left:6.02px;top:28.00px;font-size:12px;font-weight:400;color:#000;transform:scaleX(0.9778)">File</div>
<div class="t" style="left:35.34px;top:28.00px;font-size:12px;font-weight:400;color:#000;transform:scaleX(0.9556)">Search</div>
<div class="t" style="left:82.40px;top:28.00px;font-size:12px;font-weight:400;color:#000;transform:scaleX(0.9923)">View</div>
<div class="t" style="left:118.89px;top:28.00px;font-size:12px;font-weight:400;color:#000;transform:scaleX(1.0083)">Data</div>
<div class="t" style="left:155.54px;top:28.00px;font-size:12px;font-weight:400;color:#000;transform:scaleX(1.0609)">Help</div>
<div class="t" style="left:197.32px;top:52.70px;font-size:12px;font-weight:400;color:#6d6d6d;transform:scaleX(0.9813)">Find in EHANDBOOK file(s) (Ctrl+H)</div>
<div class="t" style="left:423.42px;top:52.40px;font-size:12px;font-weight:400;color:#000;transform:scaleX(0.9848)">Contains</div>
<div class="t" style="left:21.71px;top:77.00px;font-size:12px;font-weight:700;color:#4a4c50;-webkit-text-stroke:0.25px #4a4c50;transform:scaleX(0.9873)">Document Explorer</div>
<div class="t" style="left:4.12px;top:100.00px;font-size:12px;font-weight:700;color:#000;-webkit-text-stroke:0.25px #000;transform:scaleX(0.9803)">Function view (alphabetical order)</div>
<div class="t" style="left:18.83px;top:117.50px;font-size:12px;font-weight:400;color:#8c8c8c;transform:scaleX(0.9667)">Filter Functions</div>
<div class="t" style="left:37.30px;top:139.20px;font-size:12px;font-weight:400;color:#000;transform:scaleX(0.9660)">Title Page</div>
<div class="t" style="left:36.36px;top:157.40px;font-size:12px;font-weight:400;color:#000;transform:scaleX(0.9431)">Function_1</div>
<div class="t" style="left:52.36px;top:175.50px;font-size:12px;font-weight:400;color:#000;transform:scaleX(0.9414)">Function_1</div>
<div class="t" style="left:279.64px;top:76.80px;font-size:12px;font-weight:700;color:#45484c;-webkit-text-stroke:0.25px #45484c;transform:scaleX(0.9619)">Function_1</div>
<div class="t" style="left:380.34px;top:77.00px;font-size:12px;font-weight:700;color:#2a62b0;-webkit-text-stroke:0.25px #2a62b0;transform:scaleX(0.9635)">Function_1</div>
<div class="t" style="left:22.90px;top:521.20px;font-size:12px;font-weight:700;color:#45484c;-webkit-text-stroke:0.25px #45484c;transform:scaleX(0.9732)">Outline</div>
<div class="t" style="left:6.87px;top:693.70px;font-size:12px;font-weight:400;color:#333;transform:scaleX(0.9318)">EHANDBOOK_NAVIGATOR License</div>
<div class="t" style="left:202.74px;top:693.30px;font-size:12px;font-weight:400;color:#333;transform:scaleX(0.9647)">Data Source:</div>
<div class="t" style="left:276.56px;top:694.60px;font-size:12px;font-weight:400;color:#000;transform:scaleX(1.0370)">None</div>
</body></html>
